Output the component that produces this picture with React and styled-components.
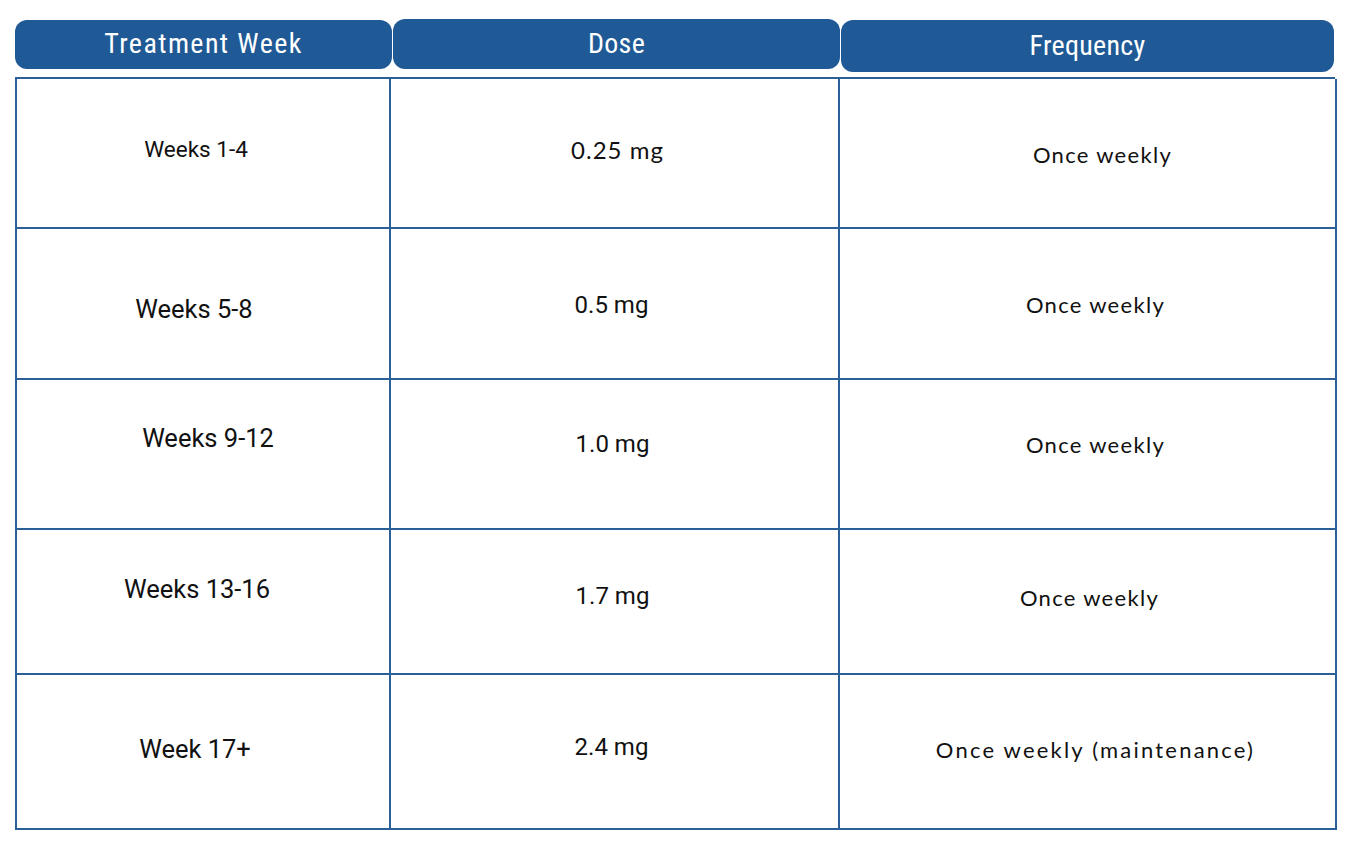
import styled, { createGlobalStyle } from "styled-components";

const GlobalStyle = createGlobalStyle`
	html, body {
		margin: 0;
		padding: 0;
		background: #ffffff;
	}
	body {
		font-family: "Roboto", "Liberation Sans", sans-serif;
	}
`;

const BLUE = "#1f5a96";
const LINE = "#2b5f97";

const Page = styled.div`
	width: 1350px;
	height: 845px;
	box-sizing: border-box;
	padding: 19px 15px 0 15px;
`;

const HeaderRow = styled.div`
	display: grid;
	grid-template-columns: 377px 447px 493px;
	column-gap: 1px;
	align-items: start;
	margin-bottom: ${(p) => p.gap}px;
`;

const HeaderPill = styled.div`
	height: ${(p) => p.h}px;
	margin-top: ${(p) => p.top}px;
	background-color: ${BLUE};
	border-radius: 12px;
	color: #ffffff;
	display: flex;
	justify-content: center;
	align-items: center;
	font-family: "Roboto", "Liberation Sans", sans-serif;
	font-stretch: condensed;
	font-weight: 400;
	font-size: 28px;
	letter-spacing: ${(p) => p.spacing}px;
	padding-bottom: 2px;
	box-sizing: border-box;
`;

const Table = styled.div`
	display: grid;
	grid-template-columns: 374px 449px 497px;
	grid-template-rows: 150px 151px 150px 145px 155px;
	width: 1320px;
	box-sizing: border-box;
	border-top: 2px solid ${LINE};
	border-left: 2px solid ${LINE};
`;

const Cell = styled.div`
	border-right: 2px solid ${LINE};
	border-bottom: 2px solid ${LINE};
	display: flex;
	justify-content: center;
	align-items: center;
	box-sizing: border-box;
	color: #111111;
`;

const fonts = {
	plain: { family: `"Roboto", "Liberation Sans", sans-serif`, size: 22.5, spacing: 0 },
	large: { family: `"Roboto", "Liberation Sans", sans-serif`, size: 25.5, spacing: 0 },
	round: { family: `"Lato", "Open Sans", sans-serif`, size: 22, spacing: 1.3 },
	dose: { family: `"Lato", "Open Sans", sans-serif`, size: 24, spacing: 1 },
	wide: { family: `"Lato", "Open Sans", sans-serif`, size: 22, spacing: 2.2 },
	narrow: { family: `"Roboto", "Liberation Sans", sans-serif`, size: 24, spacing: 0 },
};

const Label = styled.span`
	font-family: ${(p) => fonts[p.kind].family};
	font-size: ${(p) => fonts[p.kind].size}px;
	letter-spacing: ${(p) => fonts[p.kind].spacing}px;
	transform: ${(p) => `translate(${p.dx}px, ${p.dy}px)`};
	white-space: nowrap;
`;

const rows = [
	[
		{ text: "Weeks 1-4", kind: "plain", dx: -7, dy: -4 },
		{ text: "0.25 mg", kind: "dose", dx: 3, dy: -4 },
		{ text: "Once weekly", kind: "round", dx: 15, dy: 1 },
	],
	[
		{ text: "Weeks 5-8", kind: "large", dx: -9, dy: 5 },
		{ text: "0.5 mg", kind: "narrow", dx: -3, dy: 1 },
		{ text: "Once weekly", kind: "round", dx: 8, dy: 1 },
	],
	[
		{ text: "Weeks 9-12", kind: "large", dx: 5, dy: -16 },
		{ text: "1.0 mg", kind: "narrow", dx: -2, dy: -10 },
		{ text: "Once weekly", kind: "round", dx: 8, dy: -10 },
	],
	[
		{ text: "Weeks 13-16", kind: "large", dx: -6, dy: -13 },
		{ text: "1.7 mg", kind: "narrow", dx: -2, dy: -6 },
		{ text: "Once weekly", kind: "round", dx: 2, dy: -4 },
	],
	[
		{ text: "Week 17+", kind: "large", dx: -8, dy: -3 },
		{ text: "2.4 mg", kind: "narrow", dx: -3, dy: -5 },
		{ text: "Once weekly (maintenance)", kind: "wide", dx: 8, dy: -2 },
	],
];

export default function App() {
	return (
		<>
			<GlobalStyle />
			<Page>
				<HeaderRow gap={5}>
					<HeaderPill h={49} top={1} spacing={1.4}>Treatment Week</HeaderPill>
					<HeaderPill h={50} top={0} spacing={0.3}>Dose</HeaderPill>
					<HeaderPill h={52} top={1} spacing={0.3}>Frequency</HeaderPill>
				</HeaderRow>
				<Table>
					{rows.map((row, r) =>
						row.map((cell, c) => (
							<Cell key={"cell" + r + "-" + c}>
								<Label kind={cell.kind} dx={cell.dx} dy={cell.dy}>
									{cell.text}
								</Label>
							</Cell>
						))
					)}
				</Table>
			</Page>
		</>
	);
}
